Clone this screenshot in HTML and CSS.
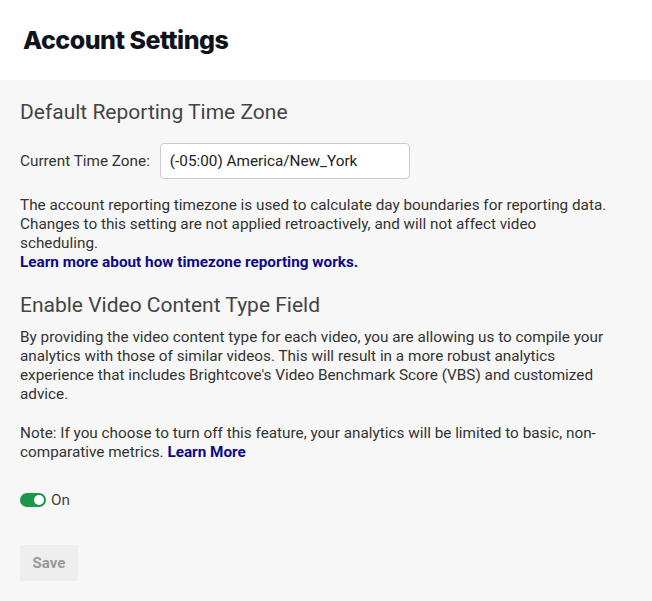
FILE: index.html
```html
<!DOCTYPE html>
<html lang="en">
<head>
<meta charset="utf-8">
<title>Account Settings</title>
<link rel="stylesheet" href="styles.css">
</head>
<body>
<header class="page-header">
  <h1 class="page-title">Account Settings</h1>
</header>
<main class="content">
  <section class="section">
    <h2 class="section-title">Default Reporting Time Zone</h2>
    <div class="field-row">
      <label class="field-label" for="tz">Current Time Zone:</label>
      <div class="select-box" id="tz">(-05:00) America/New_York</div>
    </div>
    <p class="text">The account reporting timezone is used to calculate day boundaries for reporting data. Changes to this setting are not applied retroactively, and will not affect video scheduling.<br><a class="link" href="#">Learn more about how timezone reporting works.</a></p>
  </section>
  <section class="section">
    <h2 class="section-title section-title-2">Enable Video Content Type Field</h2>
    <p class="text">By providing the video content type for each video, you are allowing us to compile your analytics with those of similar videos. This will result in a more robust analytics experience that includes Brightcove's Video Benchmark Score (VBS) and customized advice.</p>
    <p class="text note">Note: If you choose to turn off this feature, your analytics will be limited to basic, non-comparative metrics. <a class="link" href="#">Learn More</a></p>
    <div class="toggle-row">
      <span class="toggle"><span class="knob"></span></span>
      <span class="toggle-label">On</span>
    </div>
  </section>
  <button class="save-btn" type="button">Save</button>
</main>
</body>
</html>
```
FILE: styles.css
```css
* { box-sizing: border-box; }
html, body { margin: 0; padding: 0; }
body {
  background: #f7f7f7;
  font-family: Roboto, "Liberation Sans", sans-serif;
  color: #333;
  width: 652px;
  min-height: 601px;
}
.page-header {
  background: #ffffff;
  height: 80px;
  padding: 0 23px;
  display: flex;
  align-items: center;
}
.page-title {
  margin: 0;
  font-family: Inter, "Liberation Sans", sans-serif;
  font-weight: 800;
  font-size: 25px;
  letter-spacing: -0.5px;
  color: #11131c;
}
.content {
  padding: 20px 0 20px 20px;
  width: 612px;
}
.section-title {
  margin: 0;
  font-weight: 400;
  font-size: 21px;
  color: #444;
  line-height: 24px;
}
.field-row {
  display: flex;
  align-items: center;
  gap: 10px;
  margin-top: 19px;
}
.field-label {
  font-size: 15.3px;
  color: #333;
}
.select-box {
  width: 250px;
  height: 36px;
  border: 1px solid #ccc;
  border-radius: 4px;
  background: #fff;
  font-size: 15.3px;
  color: #222;
  padding: 0 9px;
  display: flex;
  align-items: center;
}
.text {
  margin: 0;
  font-size: 15.3px;
  line-height: 19px;
  color: #333;
}
.field-row + .text { margin-top: 17px; }
.link {
  color: #0b0b8c;
  font-weight: 700;
  text-decoration: none;
}
.section-title-2 { margin-top: 21px; }
.section-title-2 + .text { margin-top: 11px; }
.note { margin-top: 20px; }
.toggle-row {
  display: flex;
  align-items: center;
  gap: 5px;
  margin-top: 29px;
}
.toggle {
  width: 26px;
  height: 14px;
  border-radius: 7px;
  background: #1a9748;
  position: relative;
  display: inline-block;
}
.knob {
  position: absolute;
  top: 2px;
  right: 2px;
  width: 10px;
  height: 10px;
  border-radius: 50%;
  background: #fff;
}
.toggle-label {
  font-size: 15.3px;
  color: #444;
}
.save-btn {
  margin-top: 36px;
  width: 58px;
  height: 36px;
  border: none;
  border-radius: 2px;
  background: #eeeeee;
  color: #999;
  font-family: Roboto, "Liberation Sans", sans-serif;
  font-weight: 700;
  font-size: 15px;
  padding: 0;
}
```
